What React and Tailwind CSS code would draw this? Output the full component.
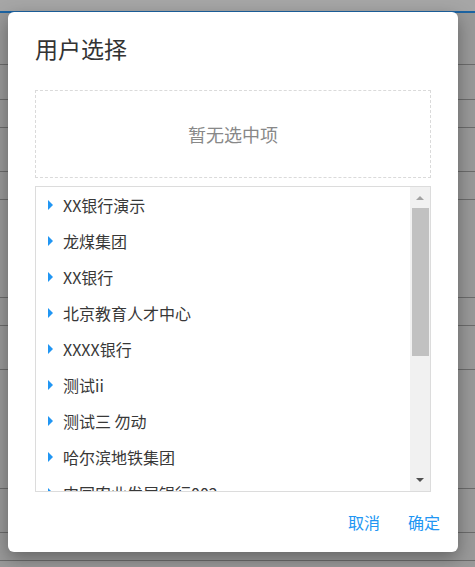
import React from "react";

const bgRows = [52, 35, 28, 44, 28, 98, 28, 44, 119, 44, 28];

const orgs = [
  "XX银行演示",
  "龙煤集团",
  "XX银行",
  "北京教育人才中心",
  "XXXX银行",
  "测试ii",
  "测试三 勿动",
  "哈尔滨地铁集团",
  "中国农业发展银行002",
];

const TreeRow = ({ label }) => (
  <div className="flex h-9 shrink-0 items-center pl-3">
    <span className="h-0 w-0 border-y-[5px] border-l-[5px] border-y-transparent border-l-[#2196f3]" />
    <span className="ml-[10px] text-[16px] whitespace-nowrap text-[#383838]">{label}</span>
  </div>
);

export default function App() {
  return (
    <div
      className="relative h-[567px] w-[475px] overflow-hidden bg-[#999999]"
      style={{ fontFamily: '"Noto Sans CJK SC", "Noto Sans", sans-serif' }}>
      {/* dimmed page behind the dialog */}
      <div className="h-[11px] bg-[#a6a6a6]" />
      <div className="h-[2px] bg-[#1d64a3]" />
      {bgRows.map((h, i) => (
        <div key={i} className="border-b border-[#6c6c6c]" style={{ height: h }} />
      ))}

      <div className="absolute top-[12px] left-[8px] flex h-[540px] w-[450px] flex-col rounded-[6px] bg-white px-[27px] shadow-[0_6px_18px_rgba(0,0,0,0.35)]">
        <h2 className="pt-[21px] text-[23px] leading-[31px] font-normal text-[#333]">用户选择</h2>

        <div className="mt-[26px] flex h-[88px] items-center justify-center border border-dashed border-[#dadada] text-[18px] text-[#888]">
          暂无选中项
        </div>

        <div className="mt-2 flex h-[306px] border border-[#dcdcdc]">
          <div className="flex flex-1 flex-col overflow-hidden">
            {orgs.map((o) => (
              <TreeRow key={o} label={o} />
            ))}
          </div>
          <div className="flex w-[20px] flex-col bg-[#f1f1f1]">
            <div className="flex h-[21px] shrink-0 items-center justify-center">
              <span className="h-0 w-0 border-x-[4px] border-b-[4px] border-x-transparent border-b-[#a3a3a3]" />
            </div>
            <div className="ml-[2px] h-[148px] w-[17px] bg-[#c1c1c1]" />
            <div className="flex-1" />
            <div className="flex h-[22px] shrink-0 items-center justify-center">
              <span className="h-0 w-0 border-x-[4px] border-t-[4px] border-x-transparent border-t-[#505050]" />
            </div>
          </div>
        </div>

        <div className="-mr-[9px] flex flex-1 items-center justify-end gap-[28px] text-[16px] text-[#2196f3]">
          <button type="button">取消</button>
          <button type="button">确定</button>
        </div>
      </div>
    </div>
  );
}
